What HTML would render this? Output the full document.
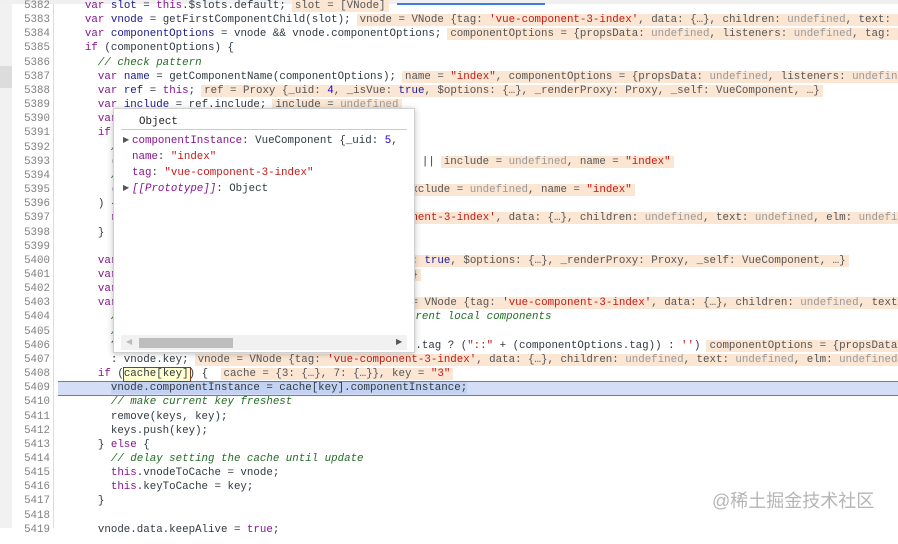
<!DOCTYPE html>
<html><head><meta charset="utf-8"><style>
*{margin:0;padding:0;box-sizing:border-box}
body{width:898px;height:528px;overflow:hidden;background:#fff;position:relative;font-family:"Liberation Mono",monospace;font-size:10.8px;color:#303942}
.strip{position:absolute;left:0;top:0;width:12px;height:528px;background:#f1f1f1}
.strip2{position:absolute;left:0;top:66px;width:12px;height:22px;background:#dcdcdc}
.gut{position:absolute;left:53px;top:0;width:1px;height:528px;background:#ddd}
.ln{position:absolute;left:14px;width:36px;text-align:right;color:#808080;line-height:14.15px;white-space:pre}
.c{position:absolute;left:59px;width:839px;height:545px;overflow:hidden;line-height:14.15px;white-space:pre}
.k{color:#881391}.v{color:#1a1a8a}.cm{color:#236e25;font-style:italic}.s{color:#c41a16}.n{color:#1c00cf}
.iv{background:#fbe6d4;color:#555;padding:0 3px;margin-left:6px}
.u{color:#999}.t{color:#1a1aa6}
.hl{position:absolute;left:58px;top:381px;width:840px;height:15px;background:#d4def6;border-top:1px solid #4a82e0;border-bottom:1px solid #4a82e0}
.top{position:absolute;left:0;top:0;width:898px;height:4px;background:#f0f0f0}
.topb{position:absolute;left:397px;top:3px;width:148px;height:2px;background:#3b7ee0}
.pop{position:absolute;left:113px;top:108px;width:302px;height:245px;background:#fff;border:1px solid #d0d0d0;box-shadow:0 1px 6px rgba(0,0,0,.25)}
.pop div{position:absolute;white-space:pre;line-height:14px}
.box{position:absolute;left:123px;top:367px;width:68px;height:15px;border:1px solid #8b3a1a;background:#ffffd0}
.wm{position:absolute;left:712px;top:487px;font-family:"Liberation Sans","Noto Sans CJK SC",sans-serif;font-size:18px;color:#b5b5b5;white-space:nowrap}
</style></head><body>
<div class="strip"></div><div class="strip2"></div><div class="gut"></div>
<div class="top"></div><div class="topb"></div>
<div class="hl"></div>
<div class="box"></div>
<div class="ln" style="top:-1px">5382
5383
5384
5385
5386
5387
5388
5389
5390
5391
5392
5393
5394
5395
5396
5397
5398
5399
5400
5401
5402
5403
5404
5405
5406
5407
5408
5409
5410
5411
5412
5413
5414
5415
5416
5417
5418
5419</div>
<div class="c" style="top:-1px">    <span class="k">var</span> <span class="v">slot</span> = <span class="k">this</span>.$slots.default;<span class="iv">slot = [VNode]</span>
    <span class="k">var</span> <span class="v">vnode</span> = getFirstComponentChild(slot);<span class="iv">vnode = VNode {tag: <span class="s">'vue-component-3-index'</span>, data: {…}, children: <span class="u">undefined</span>, text: <span class="u">undefined</span></span>
    <span class="k">var</span> <span class="v">componentOptions</span> = vnode &amp;&amp; vnode.componentOptions;<span class="iv">componentOptions = {propsData: <span class="u">undefined</span>, listeners: <span class="u">undefined</span>, tag: </span>
    <span class="k">if</span> (componentOptions) {
      <span class="cm">// check pattern</span>
      <span class="k">var</span> <span class="v">name</span> = getComponentName(componentOptions);<span class="iv">name = <span class="s">"index"</span>, componentOptions = {propsData: <span class="u">undefined</span>, listeners: <span class="u">undefined</span></span>
      <span class="k">var</span> <span class="v">ref</span> = <span class="k">this</span>;<span class="iv">ref = Proxy {_uid: <span class="n">4</span>, _isVue: <span class="t">true</span>, $options: {…}, _renderProxy: Proxy, _self: VueComponent, …}</span>
      <span class="k">var</span> <span class="v">include</span> = ref.include;<span class="iv">include = <span class="u">undefined</span></span>
      <span class="k">var</span> <span class="v">exclude</span> = ref.exclude;
      <span class="k">if</span> (
        <span class="cm">// not included</span>
        (include &amp;&amp; (!name || !matches(include, name))) ||<span class="iv">include = <span class="u">undefined</span>, name = <span class="s">"index"</span></span>
        <span class="cm">// excluded</span>
        (exclude &amp;&amp; name &amp;&amp; matches(exclude, name)) <span class="iv">exclude = <span class="u">undefined</span>, name = <span class="s">"index"</span></span>
      ) {
        <span class="k">return</span> vnode   <span class="iv">vnode = VNode {tag: <span class="s">'vue-component-3-index'</span>, data: {…}, children: <span class="u">undefined</span>, text: <span class="u">undefined</span>, elm: <span class="u">undefined</span></span>
      }

      <span class="k">var</span> <span class="v">ref$1</span> = <span class="k">this</span>;<span class="iv">ref$1 = Proxy {_uid: <span class="n">4</span>, _isVue: <span class="t">true</span>, $options: {…}, _renderProxy: Proxy, _self: VueComponent, …}</span>
      <span class="k">var</span> <span class="v">cache</span> = ref$1.cache;<span class="iv">cache = {3: {…}, 7: {…}}</span>
      <span class="k">var</span> <span class="v">keys</span> = ref$1.keys;
      <span class="k">var</span> <span class="v">key</span> = vnode.key == <span class="k">null</span>   <span class="iv">key = <span class="s">"3"</span>, vnode = VNode {tag: <span class="s">'vue-component-3-index'</span>, data: {…}, children: <span class="u">undefined</span>, text</span>
        <span class="cm">// same constructor may get registered as different local components</span>
        <span class="cm">// so cid alone is not enough (#3269)</span>
        ? componentOptions.Ctor.cid + (componentOptions.tag ? (<span class="s">"::"</span> + (componentOptions.tag)) : <span class="s">''</span>)<span class="iv">componentOptions = {propsData</span>
        : vnode.key;<span class="iv">vnode = VNode {tag: <span class="s">'vue-component-3-index'</span>, data: {…}, children: <span class="u">undefined</span>, text: <span class="u">undefined</span>, elm: <span class="u">undefined</span></span>
      <span class="k">if</span> (cache[key]) { <span class="iv">cache = {3: {…}, 7: {…}}, key = <span class="s">"3"</span></span>
        <span style="background:#c3d2f3">vnode.componentInstance = cache[key].componentInstance;</span>
        <span class="cm">// make current key freshest</span>
        remove(keys, key);
        keys.push(key);
      } <span class="k">else</span> {
        <span class="cm">// delay setting the cache until update</span>
        <span class="k">this</span>.vnodeToCache = vnode;
        <span class="k">this</span>.keyToCache = key;
      }

      vnode.data.keepAlive = <span class="k">true</span>;</div>
<div class="pop">
<div style="left:25px;top:6px;color:#222">Object</div>
<div style="left:7px;top:20px;width:286px;height:1px;background:#ccc"></div>
<div style="left:9px;top:25px;font-size:8px;color:#555">▶</div>
<div style="left:18px;top:25px"><span class="k">componentInstance</span>: VueComponent {_uid: <span class="n">5</span>,</div>
<div style="left:18px;top:41px"><span class="k">name</span>: <span class="s">"index"</span></div>
<div style="left:18px;top:57px"><span class="k">tag</span>: <span class="s">"vue-component-3-index"</span></div>
<div style="left:9px;top:73px;font-size:8px;color:#555">▶</div>
<div style="left:18px;top:73px"><span class="k" style="font-style:italic">[[Prototype]]</span>: Object</div>
<div style="left:7px;top:226px;width:286px;height:15px;background:#f1f1f1"></div>
<div style="left:25px;top:229px;width:94px;height:10px;background:#bdbdbd"></div>
<div style="left:12px;top:227px;font-size:8px;color:#bbb">◀</div>
<div style="left:282px;top:227px;font-size:8px;color:#555">▶</div>
</div>
<div class="wm">@稀土掘金技术社区</div>
</body></html>
